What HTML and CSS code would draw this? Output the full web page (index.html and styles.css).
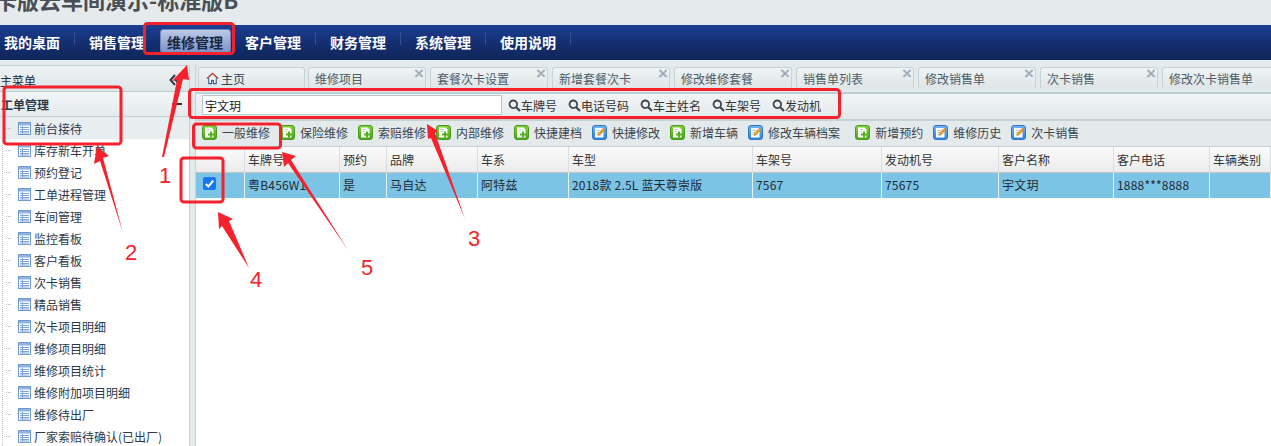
FILE: index.html
```html
<!DOCTYPE html>
<html lang="zh-CN">
<head>
<meta charset="utf-8">
<title>维修管理</title>
<link rel="stylesheet" href="styles.css">
</head>
<body>
<svg width="0" height="0" class="defs">
  <defs>
    <linearGradient id="gr" x1="0" y1="0" x2="0" y2="1"><stop offset="0" stop-color="#86d23f"/><stop offset="1" stop-color="#47a616"/></linearGradient>
    <linearGradient id="bl" x1="0" y1="0" x2="0" y2="1"><stop offset="0" stop-color="#74b6f2"/><stop offset="1" stop-color="#2f7fdc"/></linearGradient>
    <symbol id="i-add" viewBox="0 0 15 15">
      <rect x=".5" y=".5" width="14" height="14" rx="2.5" fill="url(#gr)" stroke="#4a9a1e"/>
      <path d="M3 2.500h6.500l2 2v8H3z" fill="#fff"/>
      <path d="M5 4.500h3M5 6.500h2" stroke="#a8c89a" stroke-width=".8"/>
      <path d="M8 6.500h2v2h2v2h-2v2H8v-2H6v-2h2z" fill="#54ad1d"/>
    </symbol>
    <symbol id="i-edit" viewBox="0 0 15 15">
      <rect x=".5" y=".5" width="14" height="14" rx="2.500" fill="url(#bl)" stroke="#2f78c8"/>
      <rect x="3" y="3" width="8.500" height="9.500" fill="#fff"/>
      <path d="M4.500 5.500h4M4.500 7.500h3M4.500 9.500h2" stroke="#9ab" stroke-width=".8"/>
      <path d="M6 10.500l.6-2.200 4.700-5 1.600 1.500-4.700 5z" fill="#f0a020" stroke="#b86f10" stroke-width=".5"/>
    </symbol>
    <symbol id="i-table" viewBox="0 0 13 13">
      <rect x=".5" y=".5" width="12" height="12" fill="#fff" stroke="#6f9bd1"/>
      <rect x="1" y="1" width="11" height="2.500" fill="#8fb3e0"/>
      <path d="M2 5.500h9M2 7.500h9M2 9.500h9M2 11h9M4.500 4v7.500" stroke="#7fa5d8" stroke-width="1"/>
    </symbol>
    <symbol id="i-search" viewBox="0 0 13 13">
      <circle cx="5.300" cy="5.300" r="3.800" fill="none" stroke="#3c4650" stroke-width="1.800"/>
      <path d="M8 8l4 4" stroke="#3c4650" stroke-width="2.200"/>
    </symbol>
  </defs>
</svg>

<header class="title-bar"><h1 class="title">卡版云车间演示-标准版B</h1></header>

<nav class="nav">
  <a class="nav-item home-item">我的桌面</a>
  <a class="nav-item plain">销售管理</a>
  <a class="nav-item active">维修管理</a>
  <a class="nav-item">客户管理</a>
  <a class="nav-item">财务管理</a>
  <a class="nav-item">系统管理</a>
  <a class="nav-item">使用说明</a>
</nav>

<main class="layout">
  <aside class="side">
    <div class="side-head"><span>主菜单</span><svg class="collapse" viewBox="0 0 12 12"><path d="M6 1L1.500 6 6 11M11 1L6.500 6 11 11" fill="none" stroke="#2a3a4c" stroke-width="2"/></svg></div>
    <div class="acc-head"><span>工单管理</span><span class="minus"></span></div>
    <ul class="tree">
      <li class="sel"><svg class="ti"><use href="#i-table"/></svg>前台接待</li>
      <li><svg class="ti"><use href="#i-table"/></svg>库存新车开单</li>
      <li><svg class="ti"><use href="#i-table"/></svg>预约登记</li>
      <li><svg class="ti"><use href="#i-table"/></svg>工单进程管理</li>
      <li><svg class="ti"><use href="#i-table"/></svg>车间管理</li>
      <li><svg class="ti"><use href="#i-table"/></svg>监控看板</li>
      <li><svg class="ti"><use href="#i-table"/></svg>客户看板</li>
      <li><svg class="ti"><use href="#i-table"/></svg>次卡销售</li>
      <li><svg class="ti"><use href="#i-table"/></svg>精品销售</li>
      <li><svg class="ti"><use href="#i-table"/></svg>次卡项目明细</li>
      <li><svg class="ti"><use href="#i-table"/></svg>维修项目明细</li>
      <li><svg class="ti"><use href="#i-table"/></svg>维修项目统计</li>
      <li><svg class="ti"><use href="#i-table"/></svg>维修附加项目明细</li>
      <li><svg class="ti"><use href="#i-table"/></svg>维修待出厂</li>
      <li><svg class="ti"><use href="#i-table"/></svg>厂家索赔待确认(已出厂)</li>
    </ul>
  </aside>

  <section class="content">
    <div class="tabs">
      <div class="tab first"><svg class="home" viewBox="0 0 14 14"><path d="M1 7l6-5.500L13 7" fill="none" stroke="#b03a2a" stroke-width="1.400"/><path d="M3 6.500V12.500h3V9h2v3.500h3V6.500" fill="#fff" stroke="#2b5a94" stroke-width="1.200"/></svg>主页</div>
      <div class="tab">维修项目<i class="x">×</i></div>
      <div class="tab">套餐次卡设置<i class="x">×</i></div>
      <div class="tab">新增套餐次卡<i class="x">×</i></div>
      <div class="tab">修改维修套餐<i class="x">×</i></div>
      <div class="tab">销售单列表<i class="x">×</i></div>
      <div class="tab">修改销售单<i class="x">×</i></div>
      <div class="tab">次卡销售<i class="x">×</i></div>
      <div class="tab">修改次卡销售单</div>
    </div>

    <div class="search">
      <input class="search-input" type="text" value="宇文玥">
      <span class="sbtn"><svg class="si"><use href="#i-search"/></svg>车牌号</span>
      <span class="sbtn"><svg class="si"><use href="#i-search"/></svg>电话号码</span>
      <span class="sbtn"><svg class="si"><use href="#i-search"/></svg>车主姓名</span>
      <span class="sbtn"><svg class="si"><use href="#i-search"/></svg>车架号</span>
      <span class="sbtn"><svg class="si"><use href="#i-search"/></svg>发动机</span>
    </div>

    <div class="toolbar">
      <span class="tbtn"><svg class="bi"><use href="#i-add"/></svg>一般维修</span>
      <span class="tbtn"><svg class="bi"><use href="#i-add"/></svg>保险维修</span>
      <span class="tbtn"><svg class="bi"><use href="#i-add"/></svg>索赔维修</span>
      <span class="tbtn"><svg class="bi"><use href="#i-add"/></svg>内部维修</span>
      <span class="tbtn"><svg class="bi"><use href="#i-add"/></svg>快捷建档</span>
      <span class="tbtn"><svg class="bi"><use href="#i-edit"/></svg>快捷修改</span>
      <span class="tbtn"><svg class="bi"><use href="#i-add"/></svg>新增车辆</span>
      <span class="tbtn wide"><svg class="bi"><use href="#i-edit"/></svg>修改车辆档案</span>
      <span class="tbtn"><svg class="bi"><use href="#i-add"/></svg>新增预约</span>
      <span class="tbtn"><svg class="bi"><use href="#i-edit"/></svg>维修历史</span>
      <span class="tbtn"><svg class="bi"><use href="#i-edit"/></svg>次卡销售</span>
    </div>

    <table class="grid">
      <colgroup>
        <col class="c0"><col class="c1"><col class="c2"><col class="c3"><col class="c4"><col class="c5"><col class="c6"><col class="c7"><col class="c8"><col class="c9"><col class="c10">
      </colgroup>
      <thead>
        <tr><th></th><th>车牌号</th><th>预约</th><th>品牌</th><th>车系</th><th>车型</th><th>车架号</th><th>发动机号</th><th>客户名称</th><th>客户电话</th><th>车辆类别</th></tr>
      </thead>
      <tbody>
        <tr><td class="chk"><span class="box"><svg viewBox="0 0 14 14"><path d="M3 7.500l2.800 2.700L11 4" fill="none" stroke="#fff" stroke-width="2.200"/></svg></span></td><td>粤B456W1</td><td>是</td><td>马自达</td><td>阿特兹</td><td>2018款 2.5L 蓝天尊崇版</td><td>7567</td><td>75675</td><td>宇文玥</td><td>1888***8888</td><td></td></tr>
      </tbody>
    </table>
  </section>
</main>

<svg class="notes" viewBox="0 0 1271 446" width="1271" height="446">
  <g fill="none" stroke="#f5222d" stroke-width="3">
    <rect x="144.500" y="23.500" width="89" height="30" rx="3"/>
    <rect x="4" y="87" width="117" height="57" rx="3"/>
    <rect x="189.500" y="89.500" width="650" height="28" rx="3"/>
    <rect x="193.500" y="124" width="87" height="24" rx="3"/>
    <rect x="181" y="158" width="42" height="44" rx="3"/>
  </g>
  <g fill="#f5222d">
    <path d="M162 157L177 80 172 81 187 65 189 80 183 79 164 157z"/>
    <path d="M123 233L100 161 94 164 97 146 109 156 103 158z"/>
    <path d="M249 268L222 226 219 229 218 212 233 219 229 221z"/>
    <path d="M348 250L288 163 284 167 282 152 296 156 291 160z"/>
    <path d="M465 219L431 138 428 139 427 124 438 131 435 133z"/>
  </g>
  <g class="note-num">
    <text x="159" y="183">1</text>
    <text x="125" y="260">2</text>
    <text x="468" y="246">3</text>
    <text x="250" y="287">4</text>
    <text x="361" y="275">5</text>
  </g>
</svg>
</body>
</html>
```

FILE: styles.css
```css
* { box-sizing: border-box; }
html, body { margin: 0; padding: 0; }
body {
  width: 1271px;
  height: 446px;
  overflow: hidden;
  background: #e3eaec;
  font: 12px "Noto Sans CJK SC", "Liberation Sans", sans-serif;
  color: #222;
}
.defs { position: absolute; }
.title-bar { height: 25px; overflow: hidden; background: #e5ebed; }
.title {
  margin: -14px 0 0 -5px;
  font-size: 22px;
  line-height: 26px;
  font-weight: 700;
  color: #4a4f55;
  white-space: nowrap;
}
.nav {
  height: 35px;
  display: flex;
  align-items: flex-start;
  padding-top: 4px;
  background: linear-gradient(#1c3e94, #142e6e 55%, #10265a);
}
.nav-item {
  flex: none;
  width: 85px;
  height: 28px;
  line-height: 27px;
  padding-left: 14px;
  font-size: 14px;
  font-weight: 700;
  color: #fff;
  background: linear-gradient(#34508e, #34508e) right 3px / 1px 13px no-repeat;
}
.nav-item.home-item { width: 75px; padding-left: 4px; }
.nav-item.plain { background: none; }
.nav-item.active {
  width: 71px;
  height: 24px;
  padding-left: 6px;
  line-height: 25px;
  color: #1a2740;
  border: 1px solid #6f84b8;
  border-radius: 3px;
  background: linear-gradient(#bcc9e8, #7d92c8);
}
.layout { display: flex; height: 386px; padding-top: 5px; }
.side { width: 190px; flex: none; background: #fff; border-right: 1px solid #c4d2d6; }
.side-head {
  height: 27px;
  padding: 3px 8px 0 0;
  display: flex;
  justify-content: space-between;
  align-items: center;
  background: linear-gradient(#eef2f3, #dfe6e8);
  border-bottom: 1px solid #bccdd2;
  border-top: 1px solid #c4d2d6;
  color: #1f2d3a;
}
.collapse { width: 12px; height: 12px; }
.acc-head {
  height: 25px;
  padding: 0 7px 0 1px;
  display: flex;
  justify-content: space-between;
  align-items: center;
  font-weight: 700;
  background: linear-gradient(#f3f6f6, #e4eaec);
  border-bottom: 1px solid #c4d2d6;
  color: #2a3a48;
}
.minus { width: 10px; height: 2px; background: #333; }
.tree {
  list-style: none;
  margin: 0;
  padding: 0;
  background: linear-gradient(#c0c0c0 50%, transparent 50%) 2px 0 / 1px 2px repeat-y #fff;
}
.tree li {
  height: 22px;
  display: flex;
  align-items: center;
  padding-left: 18px;
  color: #2b3a4a;
  white-space: nowrap;
  background: repeating-linear-gradient(90deg, #b8b8b8 0 1px, transparent 1px 2px) 6px 11px / 6px 1px no-repeat;
}
.tree li.sel { background: repeating-linear-gradient(90deg, #b8b8b8 0 1px, transparent 1px 2px) 6px 11px / 6px 1px no-repeat #e8eef0; }
.ti { width: 13px; height: 13px; margin-right: 3px; flex: none; }
.content { flex: 1; min-width: 0; margin-left: 5px; border-left: 1px solid #c4d2d6; background: #fff; overflow: hidden; }
.tabs {
  height: 29px;
  display: flex;
  gap: 4px;
  padding: 2px 0 0 2px;
  background: #e3eaec;
  overflow: hidden;
  border-bottom: 2px solid #bfcfd5;
}
.tab {
  flex: none;
  position: relative;
  width: 118px;
  height: 21px;
  line-height: 21px;
  padding-left: 6px;
  color: #4c5c68;
  white-space: nowrap;
  background: linear-gradient(#eff3f4, #dfe6e8);
  border: 1px solid #c6d3d7;
  border-bottom: 0;
  border-radius: 3px 3px 0 0;
}
.tab.first { width: 107px; padding-left: 7px; color: #33434f; display: flex; align-items: center; margin-right: -1px; }
.home { width: 13px; height: 13px; margin-right: 2px; }
.x {
  position: absolute;
  right: 1px;
  top: -1px;
  font: 700 17px/14px "Liberation Sans", sans-serif;
  color: #a0aeb6;
}
.search {
  height: 27px;
  display: flex;
  align-items: center;
  padding: 0 0 3px 6px;
  background: linear-gradient(#f2f5f6, #e2e8ea);
  border-bottom: 2px solid #c4d2d6;
}
.search-input {
  width: 300px;
  height: 20px;
  padding: 0 2px;
  margin-right: 6px;
  font: 12px "Noto Sans CJK SC", sans-serif;
  color: #222;
  border: 1px solid #b8c8cc;
  background: #fff;
  outline: 0;
}
.sbtn { display: flex; align-items: center; margin-right: 11px; color: #333; white-space: nowrap; }
.si { width: 13px; height: 13px; }
.toolbar {
  height: 26px;
  display: flex;
  align-items: center;
  padding: 0 0 2px 6px;
  background: #e4eaec;
  border-bottom: 1px solid #c4d2d6;
}
.tbtn { display: flex; align-items: center; margin-right: 10px; color: #3a444c; white-space: nowrap; }
.tbtn.wide { margin-right: 15px; }
.bi { width: 15px; height: 15px; margin-right: 5px; }
.grid { table-layout: fixed; border-collapse: separate; border-spacing: 0; width: 1075px; background: #fff; }
.c0 { width: 49px; } .c1 { width: 95px; } .c2 { width: 47px; } .c3 { width: 91px; }
.c4 { width: 91px; } .c5 { width: 184px; } .c6 { width: 129px; } .c7 { width: 117px; }
.c8 { width: 115px; } .c9 { width: 96px; } .c10 { width: 61px; }
.grid th, .grid td { text-align: left; white-space: nowrap; font-weight: 400; }
.grid th { height: 26px; padding: 0 0 0 3px; background: linear-gradient(#fbfbfb, #ebebeb); color: #333; border-right: 1px solid #d8dfe2; border-bottom: 1px solid #c4c8ca; }
.grid td { height: 25px; padding: 0 0 2px 3px; background: #7cc4e6; color: #1c2a34; border-right: 1px solid #e6f2f8; letter-spacing: .2px; }
.grid .chk { padding: 0; }
.box { display: block; width: 13px; height: 13px; margin: -4px 0 0 7px; background: #1677ee; border-radius: 2px; }
.box svg { display: block; width: 13px; height: 13px; }
.notes { position: absolute; left: 0; top: 0; pointer-events: none; }
.note-num { font: 22px "Liberation Sans", sans-serif; fill: #f5222d; }
```
